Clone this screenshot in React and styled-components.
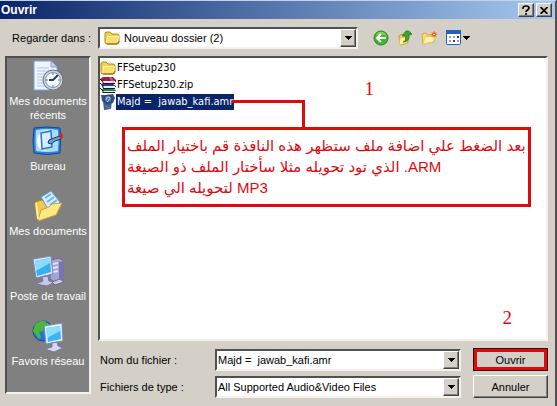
import styled, { createGlobalStyle, css } from 'styled-components';

const FACE = '#d4d0c8';
const RED = '#de0a0e';

const GlobalStyle = createGlobalStyle`
  * {
    box-sizing: border-box;
  }
  body {
    margin: 0;
    background: ${FACE};
    color: #000;
    font-family: "Liberation Sans", Arial, sans-serif;
    font-size: 11px;
    line-height: 14px;
  }
  button, input, select {
    font: inherit;
    color: inherit;
  }
`;

const raised = css`
  background: ${FACE};
  border: 1px solid;
  border-color: #fff #404040 #404040 #fff;
  box-shadow: inset -1px -1px #808080;
`;

const sunken = css`
  border: 2px solid;
  border-color: #505050 #f4f2ee #f4f2ee #505050;
`;

const Dialog = styled.div`
  display: flex;
  flex-direction: column;
  min-height: 100vh;
  background: ${FACE};
  border-top: 1px solid #c4d4e8;
  border-right: 2px solid #505050;
`;

const TitleBar = styled.header`
  display: flex;
  align-items: center;
  gap: 2px;
  height: 18px;
  padding: 0 3px 0 1px;
  background: linear-gradient(90deg, #0a246a, #a6caf0);
`;

const Title = styled.h1`
  flex: 1;
  margin: 0;
  color: #fff;
  font-size: 12px;
  line-height: 18px;
`;

const CaptionButton = styled.button`
  display: flex;
  align-items: center;
  justify-content: center;
  width: 16px;
  height: 14px;
  padding: 0;
  ${raised}
`;

const Toolbar = styled.div`
  display: grid;
  grid-template-columns: 86px 260px auto;
  align-items: center;
  column-gap: 7px;
  height: 37px;
  padding-left: 5px;
`;

const FolderLabel = styled.label`
  text-align: right;
  white-space: nowrap;
`;

const Tools = styled.div`
  display: flex;
  align-items: center;
  gap: 8px;
  padding-left: 8px;
`;

const ToolButton = styled.button`
  display: flex;
  align-items: center;
  gap: 2px;
  padding: 0;
  border: none;
  background: none;
`;

const Main = styled.div`
  display: grid;
  flex: 1;
  grid-template-columns: 86px 1fr;
  column-gap: 7px;
  padding: 0 7px 0 5px;
`;

const Places = styled.nav`
  display: flex;
  flex-direction: column;
  margin-bottom: 12px;
  padding-top: 2px;
  background: #808080;
  ${sunken}
`;

const Place = styled.button`
  display: flex;
  flex-direction: column;
  align-items: center;
  gap: 2px;
  height: 65px;
  padding: 0;
  border: none;
  background: none;
  color: #fff;

  svg {
    flex: none;
  }
`;

const Content = styled.div`
  display: flex;
  flex-direction: column;
`;

const FileList = styled.div`
  position: relative;
  flex: 1;
  background: #fff;
  font-family: "DejaVu Sans Condensed", "DejaVu Sans", sans-serif;
  ${sunken}
`;

const Files = styled.ul`
  margin: 0;
  padding: 1px 0 0;
  list-style: none;
`;

const File = styled.li`
  display: flex;
  align-items: center;
  height: 17px;
`;

const FileName = styled.span`
  padding: 0 1px;
  line-height: 16px;
  white-space: pre;
  color: ${(props) => (props.$selected ? '#fff' : '#000')};
  background: ${(props) => (props.$selected ? '#0a246a' : 'transparent')};
`;

const Connector = styled.div`
  position: absolute;
  top: 42px;
  left: 132px;
  width: 73px;
  height: 29px;
  border-top: 3px solid ${RED};
  border-right: 3px solid ${RED};
`;

const Note = styled.p`
  position: absolute;
  top: 69px;
  left: 22px;
  right: 15px;
  height: 80px;
  margin: 0;
  padding: 5px 2px;
  border: 3px solid ${RED};
  color: ${RED};
  font-family: "Liberation Sans", "DejaVu Sans", sans-serif;
  font-size: 15px;
  line-height: 21px;
  white-space: nowrap;
`;

const StepNumber = styled.span`
  position: absolute;
  top: ${(props) => props.$top};
  right: ${(props) => props.$right};
  bottom: ${(props) => props.$bottom};
  color: ${RED};
  font-family: "Liberation Serif", serif;
  font-size: 19px;
  line-height: 20px;
`;

const Form = styled.div`
  display: grid;
  grid-template-columns: 110px 1fr 75px;
  align-items: center;
  column-gap: 7px;
  row-gap: 4px;
  padding: 7px 0 8px;
`;

const FieldLabel = styled.label`
  padding-left: 2px;
`;

const FieldBox = styled.div`
  display: flex;
  align-items: center;
  height: 22px;
  margin-right: ${(props) => props.$gap || 0};
  padding-left: ${(props) => props.$inset || 0};
  background: #fff;
  ${sunken}
`;

const fieldText = css`
  flex: 1;
  min-width: 0;
  height: 100%;
  padding: 0 0 0 1px;
  border: none;
  outline: none;
  background: transparent;
  appearance: none;
`;

const TextInput = styled.input`
  ${fieldText}
`;

const Select = styled.select`
  ${fieldText}
`;

const ArrowButton = styled.button`
  display: flex;
  align-items: center;
  justify-content: center;
  align-self: stretch;
  width: 16px;
  padding: 0;
  ${raised}
`;

const PushButton = styled.button`
  height: 23px;
  padding: 0;
  ${raised}
  ${(props) => props.$marked && css`
    border: 1px solid #300;
    box-shadow: inset 0 0 0 3px ${RED};
  `}
`;

const DownArrow = () => (
  <svg width="7" height="4" viewBox="0 0 7 4" shapeRendering="crispEdges" aria-hidden="true">
    <path d="M0 0h7L3.5 4z" />
  </svg>
);

const FolderIcon = () => (
  <svg width="16" height="16" viewBox="0 0 16 16" aria-hidden="true">
    <path d="M1 4q0-2 2-2h3l2 2h5q2 0 2 2v6q0 2-2 2H3q-2 0-2-2z" fill="#f4cf55" stroke="#b18a1c" />
    <path d="M3 6h12l-1 7H2z" fill="#fff2a0" />
    <path d="M4 7h10l-1 6H3z" fill="#f9df70" />
    <path d="M3 14h10l2-3" fill="none" stroke="#8c6a10" />
  </svg>
);

// stack of three books: crimson, blue, green
const ZipIcon = () => (
  <svg width="16" height="16" viewBox="0 0 16 16" aria-hidden="true">
    <path d="M0 2l3-2h10l3 3v2H3z" fill="#a81848" />
    <path d="M3 4h12v2H3z" fill="#f1e9ec" />
    <path d="M0 6l2 1h11l3 2v1H3z" fill="#2c3a9c" />
    <path d="M3 9h12v2H3z" fill="#e9edf5" />
    <path d="M0 11l2 1h11l3 1v1H3z" fill="#178457" />
    <path d="M3 14h12v1H3z" fill="#e5f1ea" />
    <path d="M0 2l3 3v2M0 6l3 3v2M0 11l3 3v2M3 6.500h12M3 11.500h12M3 15.500h12" fill="none" stroke="#1d1020" />
    <path d="M9 0h2l3 4v2h-2z" fill="#d9a3b5" opacity=".5" />
  </svg>
);

const MediaIcon = () => (
  <svg width="16" height="16" viewBox="0 0 16 16" aria-hidden="true">
    <path d="M3 7h9l-1 8-7 1z" fill="#3f5f96" />
    <path d="M1 1l6 0 6-1 2 4-2 5-6 2-5-4z" fill="#35517f" />
    <circle cx="8" cy="5" r="4" fill="#5676a8" stroke="#243d6b" />
    <path d="M6 6q0-3 3-3 2 1 0 3L7 8" fill="none" stroke="#b4c6de" />
    <path d="M5 12l5 2" stroke="#6b88b8" />
  </svg>
);

const BackIcon = () => (
  <svg width="16" height="16" viewBox="0 0 16 16" aria-hidden="true">
    <circle cx="8" cy="8" r="7" fill="#45b52f" stroke="#238719" />
    <path d="M3 5q2-4 7-3 3 1 4 4-5-2-11-1z" fill="#8fdc72" opacity=".7" />
    <path d="M8 4L4 8l4 4M4.500 8H13" fill="none" stroke="#fff" strokeWidth="2" />
  </svg>
);

const UpIcon = () => (
  <svg width="16" height="16" viewBox="0 0 16 16" aria-hidden="true">
    <path d="M2 6l3-2 1 1 5-1v9l-8 2z" fill="#f3d35e" stroke="#c39a2c" />
    <path d="M3 8l9-2-2 7-8 2z" fill="#fff19a" stroke="#d8b443" strokeWidth=".6" />
    <path d="M6 12q4-1 2-6H5l4-5q3-1 6 3l-2 1-1-1q1 8-6 8z" fill="#3da62a" stroke="#1d6e17" strokeWidth=".7" />
  </svg>
);

const NewFolderIcon = () => (
  <svg width="17" height="16" viewBox="0 0 17 16" aria-hidden="true">
    <path d="M1 4l4-1 1 2h6l1 7-11 2z" fill="#f8dc78" stroke="#d9ac3b" />
    <path d="M4 7l11-1-3 6-10 2z" fill="#fff4a8" stroke="#e4bd55" strokeWidth=".7" />
    <path d="M13 1v7M9.500 4.500h7M10.500 2l5 5M15.500 2l-5 5" stroke="#f07c28" />
    <circle cx="13" cy="4.500" r="1.500" fill="#ffd46b" stroke="#d94722" />
  </svg>
);

const ViewsIcon = () => (
  <svg width="15" height="15" viewBox="0 0 15 15" aria-hidden="true">
    <rect x=".5" y=".5" width="14" height="14" rx="1" fill="#fff" stroke="#1f62c4" />
    <path d="M0 0h15v4H0z" fill="#1f62c4" />
    <path d="M3 6h2v2H3zM11 10h2v2h-2z" fill="#b99c83" />
    <path d="M7 6h2v2H7zM3 10h2v2H3z" fill="#8ea3c3" />
    <path d="M11 6h2v2h-2zM7 10h2v2H7z" fill="#19428e" />
  </svg>
);

const RecentIcon = () => (
  <svg width="32" height="32" viewBox="0 0 32 32" aria-hidden="true">
    <path d="M2 1h17l6 6v23H2z" fill="#edf5ff" stroke="#7fa3dc" />
    <path d="M19 1v6h6" fill="#b8d2f8" stroke="#7fa3dc" />
    <path d="M5 8h12M5 11h15M5 14h9M5 17h6M5 20h6M5 23h6M5 26h8" stroke="#a9c8f5" />
    <circle cx="21" cy="20" r="10" fill="#cbd5de" stroke="#65727e" />
    <circle cx="21" cy="20" r="7.500" fill="#f4faff" stroke="#8596a5" />
    <path d="M21 13v2M21 25v2M14 20h2M26 20h2" stroke="#527390" />
    <path d="M26 15l-5 5h-4" fill="none" stroke="#263d57" strokeWidth="2" />
  </svg>
);

const DesktopIcon = () => (
  <svg width="32" height="32" viewBox="0 0 32 32" aria-hidden="true">
    <path d="M2 3q13-2 26 0 1 12 0 25-12 3-26 0-2-12 0-25z" fill="#2e83df" stroke="#0d459b" />
    <path d="M4 5q11-2 22 0 1 11 0 21-11 2-22 0-1-11 0-21z" fill="#a9dcfb" />
    <path d="M5 15q1-11 14-10-8 2-9 10-1 8 5 11-10 0-10-11z" fill="#fff" opacity=".9" />
    <path d="M9 8l10-2 1 16-10 2z" fill="#d3ecff" stroke="#2b75c1" strokeWidth="1.500" />
    <path d="M16 18l1-3 5-2 6-2 1 3-6 2-4 3z" fill="#6fa0cf" stroke="#173c6c" />
    <path d="M27 9l3-1 1 4-3 2z" fill="#d72616" />
  </svg>
);

const DocumentsIcon = () => (
  <svg width="32" height="32" viewBox="0 0 32 32" aria-hidden="true">
    <path d="M3 12l7-2 3 3 13-2-1 13-19 7z" fill="#f4c947" stroke="#bc8b20" />
    <path d="M9 7l10-6 9 11-9 12z" fill="#d6efff" stroke="#579bd7" />
    <path d="M13 8l6-4M15 12l7-5M18 15l7-5" stroke="#68b6ee" strokeWidth="2" />
    <path d="M9 20l8-3 3-3 10-1-6 12-18 6z" fill="#ffe985" stroke="#cda135" />
    <path d="M4 13l2 16" stroke="#fff1a1" strokeWidth="2" />
  </svg>
);

const ComputerIcon = () => (
  <svg width="32" height="32" viewBox="0 0 32 32" aria-hidden="true">
    <path d="M18 5l9-2 5 3v18l-8 4-6-4z" fill="#a4a3d1" stroke="#68679c" />
    <path d="M27 7v19l5-3V6z" fill="#7775ad" />
    <path d="M21 9l5-1M21 13l5-1M21 17l5-1" stroke="#e3e3f7" strokeWidth="2" />
    <path d="M1 4l18-3 2 18-17 4z" fill="#dce2f4" stroke="#7787ba" />
    <path d="M3 6l15-3 1 14-14 4z" fill="#35aef3" />
    <path d="M3 6l15-3v5L4 16z" fill="#9be8ff" opacity=".8" />
    <path d="M10 22l6-1 1 5 6 1-8 4-11-2 7-3z" fill="#c7c8ea" stroke="#7776ad" />
    <path d="M20 27l8-3 4 3-9 3z" fill="#c9c9e5" stroke="#69698f" />
  </svg>
);

const NetworkIcon = () => (
  <svg width="32" height="32" viewBox="0 0 32 32" aria-hidden="true">
    <circle cx="11" cy="11" r="10" fill="#2672d7" stroke="#1a4a9c" />
    <path d="M3 5q4-5 10-4l2 3-4 3 1 4-5 1 2 5-2 2-6-8z" fill="#46b93b" />
    <path d="M15 3l5 4-2 5-5-1z" fill="#76cf4b" />
    <path d="M12 6l18-3 1 18-17 3z" fill="#e4edf8" stroke="#7789b4" />
    <path d="M14 8l14-2 1 13-13 3z" fill="#3fb4f3" />
    <path d="M14 8l14-2v5l-13 7z" fill="#a1ebff" opacity=".8" />
    <path d="M20 23l5-1 1 4 5 2-9 4-9-3 7-2z" fill="#d6d8ed" stroke="#777aab" />
  </svg>
);

const places = [
  { label: 'Mes documents récents', icon: RecentIcon },
  { label: 'Bureau', icon: DesktopIcon },
  { label: 'Mes documents', icon: DocumentsIcon },
  { label: 'Poste de travail', icon: ComputerIcon },
  { label: 'Favoris réseau', icon: NetworkIcon },
];

const files = [
  { name: 'FFSetup230', icon: FolderIcon },
  { name: 'FFSetup230.zip', icon: ZipIcon },
  { name: 'Majd =  jawab_kafi.amr', icon: MediaIcon, selected: true },
];

const App = () => (
  <>
    <GlobalStyle />
    <Dialog>
      <TitleBar>
        <Title>Ouvrir</Title>
        <CaptionButton aria-label="Aide">
          <svg width="8" height="10" viewBox="0 0 8 10" aria-hidden="true">
            <path d="M1 4V3q0-2 3-2t3 2q0 1-1.500 2T4 7M4 8v2" fill="none" stroke="#000" strokeWidth="1.600" />
          </svg>
        </CaptionButton>
        <CaptionButton aria-label="Fermer">
          <svg width="8" height="7" viewBox="0 0 8 7" aria-hidden="true">
            <path d="M.5 0l7 7M7.500 0l-7 7" stroke="#000" strokeWidth="1.700" />
          </svg>
        </CaptionButton>
      </TitleBar>

      <Toolbar>
        <FolderLabel htmlFor="folder">Regarder dans :</FolderLabel>
        <FieldBox $inset="4px">
          <FolderIcon />
          <Select id="folder">
            <option>&nbsp;Nouveau dossier (2)</option>
          </Select>
          <ArrowButton tabIndex={-1} aria-label="Dossiers"><DownArrow /></ArrowButton>
        </FieldBox>
        <Tools>
          <ToolButton aria-label="Retour"><BackIcon /></ToolButton>
          <ToolButton aria-label="Dossier parent"><UpIcon /></ToolButton>
          <ToolButton aria-label="Nouveau dossier"><NewFolderIcon /></ToolButton>
          <ToolButton aria-label="Affichage">
            <ViewsIcon />
            <DownArrow />
          </ToolButton>
        </Tools>
      </Toolbar>

      <Main>
        <Places>
          {places.map(({ label, icon: Icon }) => (
            <Place key={label}>
              <Icon />
              {label}
            </Place>
          ))}
        </Places>

        <Content>
          <FileList>
            <Files>
              {files.map(({ name, icon: Icon, selected }) => (
                <File key={name}>
                  <Icon />
                  <FileName $selected={selected}>{name}</FileName>
                </File>
              ))}
            </Files>
            <Connector />
            <Note lang="ar">
              بعد الضغط علي اضافة ملف ستظهر هذه النافذة قم باختيار الملف
              <br />
              الذي تود تحويله مثلا سأختار الملف ذو الصيغة .ARM
              <br />
              لتحويله الي صيغة MP3
            </Note>
            <StepNumber $top="21px" $right="172px">1</StepNumber>
            <StepNumber $bottom="11px" $right="34px">2</StepNumber>
          </FileList>

          <Form>
            <FieldLabel htmlFor="name">Nom du fichier :</FieldLabel>
            <FieldBox $gap="5px">
              <TextInput id="name" defaultValue="Majd =  jawab_kafi.amr" />
              <ArrowButton tabIndex={-1} aria-label="Fichiers récents"><DownArrow /></ArrowButton>
            </FieldBox>
            <PushButton $marked>Ouvrir</PushButton>
            <FieldLabel htmlFor="type">Fichiers de type :</FieldLabel>
            <FieldBox $gap="5px">
              <Select id="type">
                <option>All Supported Audio&amp;Video Files</option>
              </Select>
              <ArrowButton tabIndex={-1} aria-label="Types de fichier"><DownArrow /></ArrowButton>
            </FieldBox>
            <PushButton>Annuler</PushButton>
          </Form>
        </Content>
      </Main>
    </Dialog>
  </>
);

export default App;
